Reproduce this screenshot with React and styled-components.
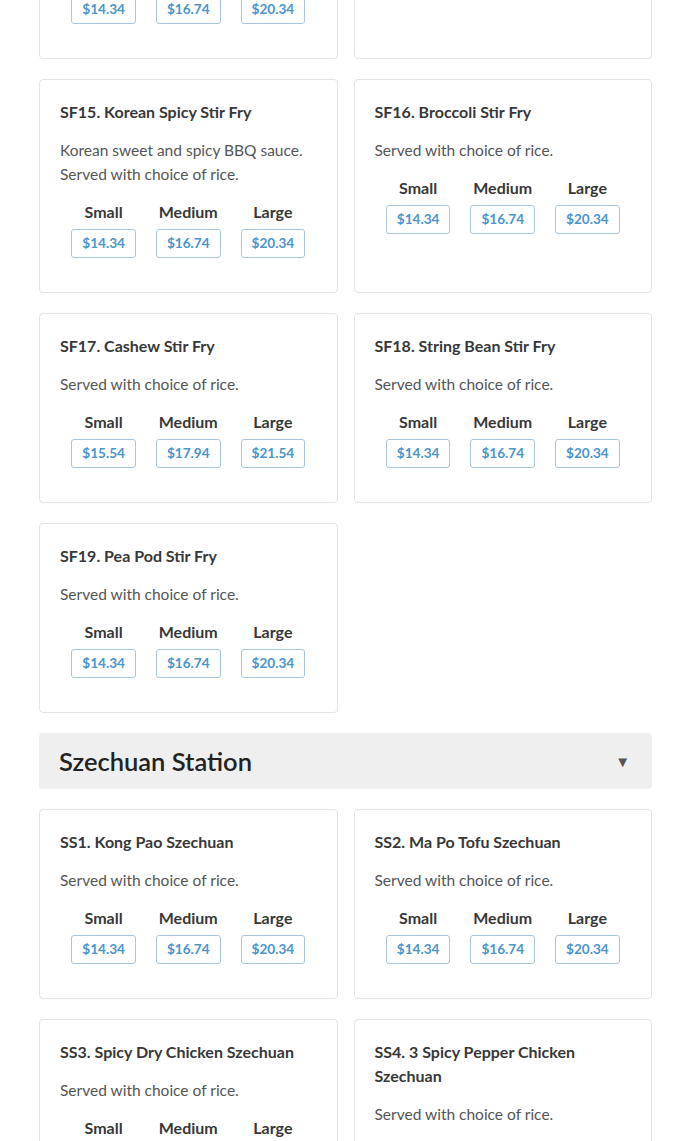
import React from "react";
import styled, { createGlobalStyle } from "styled-components";

const Global = createGlobalStyle`
  html, body { margin: 0; padding: 0; overflow: hidden; background: #fff; }
  body { font-family: Lato, "Open Sans", "Liberation Sans", sans-serif; color: #333; }
`;

const Page = styled.div`
  width: 613px;
  margin: -155px 0 0 39px;
  display: flex;
  flex-direction: column;
  gap: 20px;
`;

const Grid = styled.div`
  display: grid;
  grid-template-columns: 1fr 1fr;
  column-gap: 16px;
  row-gap: 20px;
`;

const Card = styled.div`
  border: 1px solid #e3e3e3;
  border-radius: 4px;
  padding: 20px;
  background: #fff;
`;

const Title = styled.h3`
  margin: 0 0 14px;
  font-size: 16px;
  line-height: 24px;
  font-weight: 700;
  color: #383838;
`;

const Desc = styled.p`
  margin: 0 0 14px;
  font-size: 15.5px;
  line-height: 24px;
  color: #555;
`;

const Prices = styled.div`
  display: flex;
  justify-content: center;
  gap: 20px;
  margin-bottom: 14px;
`;

const PriceCol = styled.div`
  display: flex;
  flex-direction: column;
  align-items: center;
  gap: 5px;
`;

const SizeLabel = styled.span`
  font-size: 16px;
  line-height: 24px;
  font-weight: 700;
  color: #383838;
`;

const PriceButton = styled.button`
  height: 29px;
  padding: 0 10px;
  border: 1px solid #a9c6d8;
  border-radius: 3px;
  background: #fff;
  color: #4a95cc;
  font-family: inherit;
  font-size: 13.6px;
  font-weight: 700;
  line-height: 27px;
  cursor: pointer;
`;

const SectionHeader = styled.div`
  display: flex;
  align-items: center;
  justify-content: space-between;
  height: 56px;
  box-sizing: border-box;
  padding: 0 22px 0 20px;
  background: #efefef;
  border-radius: 4px;
`;

const SectionTitle = styled.h2`
  margin: 0;
  font-size: 25.5px;
  line-height: 36px;
  font-weight: 600;
  color: #222;
`;

const Caret = styled.span`
  font-size: 15px;
  color: #555;
  line-height: 1;
`;

const defaultPrices = ["$14.34", "$16.74", "$20.34"];

const stirFry = [
  { name: "SF13. Mongolian Stir Fry", desc: "Savory brown sauce with green onions. Served with choice of rice." },
  { name: "SF14. Ginger Stir Fry", desc: "Served with choice of rice." },
  { name: "SF15. Korean Spicy Stir Fry", desc: "Korean sweet and spicy BBQ sauce. Served with choice of rice." },
  { name: "SF16. Broccoli Stir Fry", desc: "Served with choice of rice." },
  { name: "SF17. Cashew Stir Fry", desc: "Served with choice of rice.", prices: ["$15.54", "$17.94", "$21.54"] },
  { name: "SF18. String Bean Stir Fry", desc: "Served with choice of rice." },
  { name: "SF19. Pea Pod Stir Fry", desc: "Served with choice of rice." },
];

const szechuan = [
  { name: "SS1. Kong Pao Szechuan", desc: "Served with choice of rice." },
  { name: "SS2. Ma Po Tofu Szechuan", desc: "Served with choice of rice." },
  { name: "SS3. Spicy Dry Chicken Szechuan", desc: "Served with choice of rice." },
  { name: "SS4. 3 Spicy Pepper Chicken Szechuan", desc: "Served with choice of rice." },
];

const sizes = ["Small", "Medium", "Large"];

function Item({ item }) {
  const prices = item.prices || defaultPrices;
  return (
    <Card>
      <Title>{item.name}</Title>
      <Desc>{item.desc}</Desc>
      <Prices>
        {sizes.map((s, i) => (
          <PriceCol key={s}>
            <SizeLabel>{s}</SizeLabel>
            <PriceButton>{prices[i]}</PriceButton>
          </PriceCol>
        ))}
      </Prices>
    </Card>
  );
}

export default function App() {
  return (
    <>
      <Global />
      <Page>
        <Grid>
          {stirFry.map((it) => (
            <Item key={it.name} item={it} />
          ))}
        </Grid>
        <SectionHeader>
          <SectionTitle>Szechuan Station</SectionTitle>
          <Caret>▼</Caret>
        </SectionHeader>
        <Grid>
          {szechuan.map((it) => (
            <Item key={it.name} item={it} />
          ))}
        </Grid>
      </Page>
    </>
  );
}
